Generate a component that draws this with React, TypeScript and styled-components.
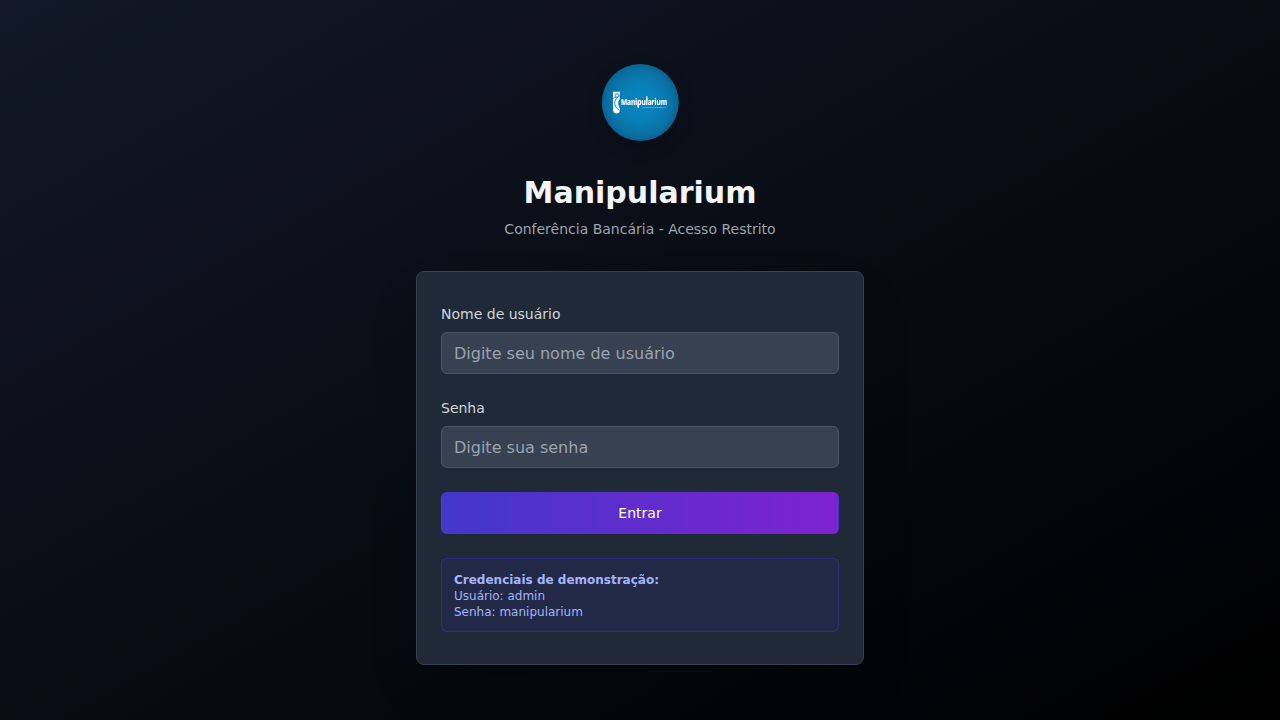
import React from "react";
import styled, { createGlobalStyle } from "styled-components";

const GlobalStyle = createGlobalStyle`
  *, *::before, *::after { box-sizing: border-box; }
  body { margin: 0; font-family: "DejaVu Sans", sans-serif; line-height: 1.5; }
  h1, p { margin: 0; }
`;

const Page = styled.main`
  min-height: 100vh;
  display: flex;
  align-items: center;
  justify-content: center;
  background: linear-gradient(to bottom right, #111827, #000000);
`;

const Column = styled.div`
  width: 448px;
  display: flex;
  flex-direction: column;
  gap: 32px;
`;

const Header = styled.header`
  display: flex;
  flex-direction: column;
  align-items: center;
`;

const Logo = styled.svg`
  width: 96px;
  height: 96px;
  display: block;
  overflow: visible;
  filter: drop-shadow(0 6px 8px rgba(0, 0, 0, 0.2));
`;

const Title = styled.h1`
  margin-top: 24px;
  font-size: 30px;
  line-height: 36px;
  font-weight: 700;
  color: #f3f4f6;
`;

const Subtitle = styled.p`
  margin-top: 8px;
  font-size: 14px;
  line-height: 20px;
  color: #9ca3af;
`;

const Card = styled.form`
  display: flex;
  flex-direction: column;
  gap: 24px;
  padding: 32px 24px;
  border: 1px solid #374151;
  border-radius: 8px;
  background: #1f2937;
  box-shadow: 0 25px 50px -12px rgba(0, 0, 0, 0.25);
`;

const Field = styled.div`
  display: flex;
  flex-direction: column;
  gap: 8px;
`;

const Label = styled.label`
  font-size: 14px;
  line-height: 20px;
  color: #d1d5db;
`;

const Input = styled.input`
  width: 100%;
  height: 42px;
  padding: 8px 12px;
  border: 1px solid #4b5563;
  border-radius: 6px;
  background: #374151;
  font: 16px/24px "DejaVu Sans", sans-serif;
  color: #f3f4f6;
  outline: none;
  box-shadow: 0 1px 2px rgba(0, 0, 0, 0.05);
  &::placeholder { color: #9ca3af; opacity: 1; }
`;

const SubmitButton = styled.button`
  height: 42px;
  padding: 10px 16px;
  border: 1px solid transparent;
  border-radius: 6px;
  background-image: linear-gradient(to right, #4338ca, #7e22ce);
  font: 500 14px/20px "DejaVu Sans", sans-serif;
  color: #ffffff;
  cursor: pointer;
`;

const Hint = styled.div`
  padding: 13px 12px 11px;
  border: 1px solid rgba(55, 48, 163, 0.6);
  border-radius: 6px;
  background: rgba(49, 46, 129, 0.2);
  font-size: 12px;
  line-height: 16px;
  color: #a5b4fc;
`;

function BrandLogo() {
  return (
    <Logo viewBox="0 0.5 96 96" role="img" aria-label="Manipularium">
      <defs>
        <radialGradient id="disc">
          <stop offset="0" stopColor="#0786c2" />
          <stop offset="0.5" stopColor="#097fb8" />
          <stop offset="0.85" stopColor="#0a70a3" />
          <stop offset="1" stopColor="#0b6291" />
        </radialGradient>
      </defs>
      <circle cx="48.3" cy="48" r="38.5" fill="url(#disc)" />
      <path d="M21 37.200h7l-.5 4.600c.7 4.800.4 9.700.3 14.500c0 3.500-6.600 3.500-6.600 0z" fill="#fff" />
      <path d="M28.300 43.700c-2.900 2.900-2.700 6.800.1 10.600z" fill="#0a7db6" />
      <g fill="none" stroke="#0a73aa" strokeWidth="0.9">
        <circle cx="25" cy="41" r="1.700" />
        <path d="M21 44.200c1.100-1.100 2-1.200 3.200-1.400M25.300 43.200c-2.900 2.700-3.300 6.200-1.200 9.400 1.200 1.700 2.300 2.600 3.500 3.200" />
      </g>
      <text x="28.900" y="50" textLength="46.300" lengthAdjust="spacingAndGlyphs" fontFamily="Noto Sans, sans-serif" fontWeight="700" fontSize="8.200" fill="#fff" stroke="#fff" strokeWidth="0.15">Manipularium</text>
      <path d="M54.800 41.800v5M46.300 48v5.600" stroke="#fff" strokeWidth="1.200" />
      <text x="50.500" y="53" textLength="23.500" lengthAdjust="spacingAndGlyphs" fontFamily="Noto Sans, sans-serif" fontSize="2.200" fill="#a9d5ea">Fórmulas Farmacêuticas</text>
    </Logo>
  );
}

export default function App() {
  return (
    <>
      <GlobalStyle />
      <Page>
        <Column>
          <Header>
            <BrandLogo />
            <Title>Manipularium</Title>
            <Subtitle>Conferência Bancária - Acesso Restrito</Subtitle>
          </Header>
          <Card onSubmit={(event: React.FormEvent) => event.preventDefault()}>
            <Field>
              <Label htmlFor="username">Nome de usuário</Label>
              <Input id="username" type="text" placeholder="Digite seu nome de usuário" />
            </Field>
            <Field>
              <Label htmlFor="password">Senha</Label>
              <Input id="password" type="password" placeholder="Digite sua senha" />
            </Field>
            <SubmitButton type="submit">Entrar</SubmitButton>
            <Hint>
              <strong>Credenciais de demonstração:</strong>
              <p>Usuário: admin</p>
              <p>Senha: manipularium</p>
            </Hint>
          </Card>
        </Column>
      </Page>
    </>
  );
}
